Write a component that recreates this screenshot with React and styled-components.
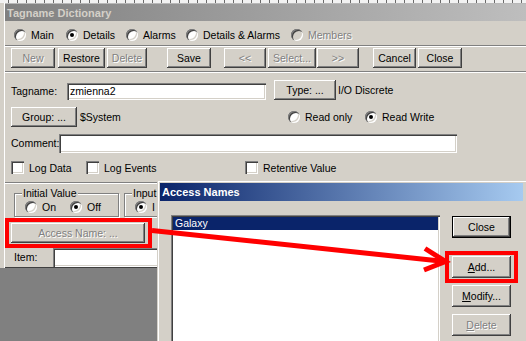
import React from 'react';
import styled, { createGlobalStyle } from 'styled-components';

const FONT = `"Liberation Sans", Arial, Helvetica, sans-serif`;

const Global = createGlobalStyle`
  html, body { margin: 0; padding: 0; background: #808080; }
  * { box-sizing: border-box; }
`;

const Screen = styled.div`
  position: relative;
  width: 526px;
  height: 341px;
  overflow: hidden;
  background: #808080;
  font: 10.5px ${FONT};
  color: #000;
`;

const Desk = styled.div`
  background: #d4d0c8;
`;

const TopStrip = styled.div`
  height: 3px;
  background: repeating-linear-gradient(90deg, #f2f2f2 0 8px, #6a6a6a 8px 9px);
`;

const Window = styled.div`
  margin-left: 3px;
  width: 540px;
  padding: 1px 0 1px 2px;
  background: #d4d0c8;
  box-shadow: inset 1px 0 0 #d4d0c8, inset 2px 0 0 #fff, inset 0 1px 0 #b8b8b8,
    inset 0 -1px 0 #404040;
`;

const TitleBar = styled.div`
  height: ${(p) => p.$h || 17}px;
  display: flex;
  align-items: center;
  padding-left: 2px;
  background: linear-gradient(
    90deg,
    ${(p) => (p.$active ? '#0a246a, #a6caf0' : '#808080, #c0c0c0')}
  );
  color: ${(p) => (p.$active ? '#fff' : '#d4d0c8')};
  font-size: 11px;
  font-weight: bold;
  white-space: nowrap;
`;

const RadioRow = styled.div`
  display: flex;
  align-items: center;
  height: 20px;
  margin-top: 4px;
  padding-left: 9px;
`;

const Item = styled.label`
  display: flex;
  align-items: center;
  gap: 5px;
  flex: none;
  width: ${(p) => (p.$w ? `${p.$w}px` : 'auto')};
  white-space: nowrap;
  color: ${(p) => (p.$disabled ? '#808080' : '#000')};
  text-shadow: ${(p) => (p.$disabled ? '1px 1px 0 #fff' : 'none')};
`;

const Radio = styled.span`
  flex: none;
  width: 12px;
  height: 12px;
  border-radius: 50%;
  background: ${(p) => (p.$disabled ? '#d4d0c8' : '#fff')};
  box-shadow: inset 1px 1px 0 #808080, inset 2px 2px 0 #404040,
    inset -1px -1px 0 #fff, inset -2px -2px 0 #d4d0c8;
  display: flex;
  align-items: center;
  justify-content: center;
  text-shadow: none;
  &::after {
    content: '';
    width: 4px;
    height: 4px;
    border-radius: 50%;
    background: #000;
    display: ${(p) => (p.$checked ? 'block' : 'none')};
  }
`;

const Check = styled.span`
  flex: none;
  width: 13px;
  height: 13px;
  background: #fff;
  box-shadow: inset 1px 1px 0 #808080, inset 2px 2px 0 #404040,
    inset -1px -1px 0 #fff, inset -2px -2px 0 #d4d0c8;
`;

const Separator = styled.div`
  height: 2px;
  border-top: 1px solid #808080;
  border-bottom: 1px solid #fff;
`;

const ButtonRow = styled.div`
  display: flex;
  padding: 1px 0 3px 6px;
`;

const Btn = styled.button`
  flex: none;
  font: 10.5px ${FONT};
  width: ${(p) => p.$w}px;
  height: ${(p) => p.$h || 20}px;
  margin: 0 0 0 ${(p) => p.$ml || 0}px;
  padding: 0;
  background: #d4d0c8;
  color: ${(p) => (p.disabled ? '#808080' : '#000')};
  text-shadow: ${(p) => (p.disabled ? '1px 1px 0 #fff' : 'none')};
  border: ${(p) => (p.$default ? '1px solid #000' : 'none')};
  box-shadow: inset -1px -1px 0 #404040, inset 1px 1px 0 #fff,
    inset -2px -2px 0 #808080, inset 2px 2px 0 #d4d0c8;
  white-space: nowrap;
  u { text-decoration: underline; }
`;

const Form = styled.div`
  padding: 7px 0 8px 6px;
`;

const Row = styled.div`
  display: flex;
  align-items: ${(p) => p.$align || 'center'};
  margin-top: ${(p) => p.$mt || 0}px;
  margin-left: ${(p) => p.$ml || 0}px;
`;

const Label = styled.span`
  flex: none;
  width: ${(p) => (p.$w ? `${p.$w}px` : 'auto')};
  margin-left: ${(p) => p.$ml || 0}px;
  line-height: ${(p) => p.$lh || 13}px;
  white-space: nowrap;
`;

const Field = styled.div`
  flex: none;
  width: ${(p) => p.$w}px;
  height: ${(p) => p.$h}px;
  background: #fff;
  padding: 2px 3px;
  line-height: ${(p) => p.$h - 4}px;
  box-shadow: inset 1px 1px 0 #808080, inset 2px 2px 0 #404040,
    inset -1px -1px 0 #fff, inset -2px -2px 0 #d4d0c8;
  white-space: nowrap;
`;

const Lower = styled.div`
  padding-top: 3px;
`;

const GroupRow = styled.div`
  display: flex;
  gap: 5px;
  margin-left: 9px;
`;

const Group = styled.fieldset`
  flex: none;
  width: ${(p) => p.$w}px;
  margin: 0;
  padding: 1px 0 3px 10px;
  min-inline-size: 0;
  border: 1px solid #808080;
  box-shadow: 1px 1px 0 #fff, inset 1px 1px 0 #fff;
  display: flex;
  align-items: center;
`;

const Legend = styled.legend`
  margin-left: -3px;
  padding: 0 1px;
  line-height: 13px;
  background: #d4d0c8;
  white-space: nowrap;
`;

const Dialog = styled.div`
  position: absolute;
  left: 157px;
  top: 180px;
  width: 369px;
  height: 190px;
  padding: 3px;
  background: #d4d0c8;
  box-shadow: inset 1px 1px 0 #d4d0c8, inset 2px 2px 0 #fff;
`;

const DialogBody = styled.div`
  display: flex;
  padding: 14px 0 0 11px;
`;

const ListBox = styled.div`
  flex: none;
  width: 269px;
  height: 160px;
  background: #fff;
  padding: 2px;
  box-shadow: inset 1px 1px 0 #808080, inset 2px 2px 0 #404040,
    inset -1px -1px 0 #fff, inset -2px -2px 0 #d4d0c8;
`;

const ListItem = styled.div`
  height: 13px;
  line-height: 13px;
  padding-left: 2px;
  background: ${(p) => (p.$selected ? '#0a246a' : 'transparent')};
  color: ${(p) => (p.$selected ? '#fff' : '#000')};
`;

const ButtonCol = styled.div`
  display: flex;
  flex-direction: column;
  margin: 1px 0 0 12px;
`;

const ColBtn = styled(Btn)`
  margin: ${(p) => p.$mt || 0}px 0 0 0;
`;

const Overlay = styled.svg`
  position: absolute;
  left: 0;
  top: 0;
  pointer-events: none;
`;

function RadioOpt({ w, checked, disabled, children }) {
  return (
    <Item $w={w} $disabled={disabled}>
      <Radio $checked={checked} $disabled={disabled} />
      {children}
    </Item>
  );
}

function CheckOpt({ w, children }) {
  return (
    <Item $w={w}>
      <Check />
      {children}
    </Item>
  );
}

export default function App() {
  return (
    <>
      <Global />
      <Screen>
        <Desk>
          <TopStrip />
          <Window>
            <TitleBar>Tagname Dictionary</TitleBar>
            <RadioRow>
              <RadioOpt w={52}>Main</RadioOpt>
              <RadioOpt w={60} checked>Details</RadioOpt>
              <RadioOpt w={60}>Alarms</RadioOpt>
              <RadioOpt w={105}>Details &amp; Alarms</RadioOpt>
              <RadioOpt disabled>Members</RadioOpt>
            </RadioRow>
            <Separator />
            <ButtonRow>
              <Btn $w={44} disabled>New</Btn>
              <Btn $w={47} $ml={3}>Restore</Btn>
              <Btn $w={40} $ml={2} disabled>Delete</Btn>
              <Btn $w={44} $ml={20}>Save</Btn>
              <Btn $w={42} $ml={13} disabled>&lt;&lt;</Btn>
              <Btn $w={48} $ml={2} disabled>Select...</Btn>
              <Btn $w={42} $ml={1} disabled>&gt;&gt;</Btn>
              <Btn $w={43} $ml={14}>Cancel</Btn>
              <Btn $w={44} $ml={2}>Close</Btn>
            </ButtonRow>
            <Separator />
            <Form>
              <Row $align="flex-end">
                <Label $w={56} $lh={17}>Tagname:</Label>
                <Field $w={199} $h={17}>zmienna2</Field>
                <Btn $w={62} $ml={8}>Type: ...</Btn>
                <Label $ml={2} $lh={20}>I/O Discrete</Label>
              </Row>
              <Row $mt={7}>
                <Btn $w={66}>Group: ...</Btn>
                <Label $w={208} $ml={3}>$System</Label>
                <RadioOpt w={77}>Read only</RadioOpt>
                <RadioOpt checked>Read Write</RadioOpt>
              </Row>
              <Row $mt={7}>
                <Label $w={48}>Comment:</Label>
                <Field $w={398} $h={19} />
              </Row>
              <Row $mt={8}>
                <CheckOpt w={75}>Log Data</CheckOpt>
                <CheckOpt w={159}>Log Events</CheckOpt>
                <CheckOpt>Retentive Value</CheckOpt>
              </Row>
            </Form>
            <Separator />
            <Lower>
              <GroupRow>
                <Group $w={105}>
                  <Legend>Initial Value</Legend>
                  <RadioOpt w={45}>On</RadioOpt>
                  <RadioOpt checked>Off</RadioOpt>
                </Group>
                <Group $w={150}>
                  <Legend>Input</Legend>
                  <RadioOpt w={60} checked>I</RadioOpt>
                </Group>
              </GroupRow>
              <Row $mt={6} $ml={6}>
                <Btn $w={134} disabled>Access Name: ...</Btn>
              </Row>
              <Row $mt={5} $ml={9}>
                <Label $w={39}>Item:</Label>
                <Field $w={300} $h={19} />
              </Row>
            </Lower>
          </Window>
        </Desk>

        <Dialog>
          <TitleBar $active $h={18}>Access Names</TitleBar>
          <DialogBody>
            <ListBox>
              <ListItem $selected>Galaxy</ListItem>
            </ListBox>
            <ButtonCol>
              <ColBtn $w={59} $h={22} $default>Close</ColBtn>
              <ColBtn $w={59} $h={22} $mt={18}>
                <u>A</u>dd...
              </ColBtn>
              <ColBtn $w={59} $h={22} $mt={7}>
                <u>M</u>odify...
              </ColBtn>
              <ColBtn $w={59} $h={22} $mt={7} disabled>
                <u>D</u>elete
              </ColBtn>
            </ButtonCol>
          </DialogBody>
        </Dialog>

        <Overlay width="526" height="341" viewBox="0 0 526 341">
          <g fill="none" stroke="#ff0000" strokeWidth="4">
            <rect x="7" y="220" width="143" height="26" />
            <rect x="447" y="253" width="69" height="28" />
          </g>
          <g stroke="#ff0000" strokeWidth="5" strokeLinecap="butt" fill="none">
            <line x1="152" y1="230.5" x2="445" y2="261.5" />
            <polyline points="425,248.5 445.5,261.5 424,270" strokeLinejoin="miter" />
          </g>
        </Overlay>
      </Screen>
    </>
  );
}
